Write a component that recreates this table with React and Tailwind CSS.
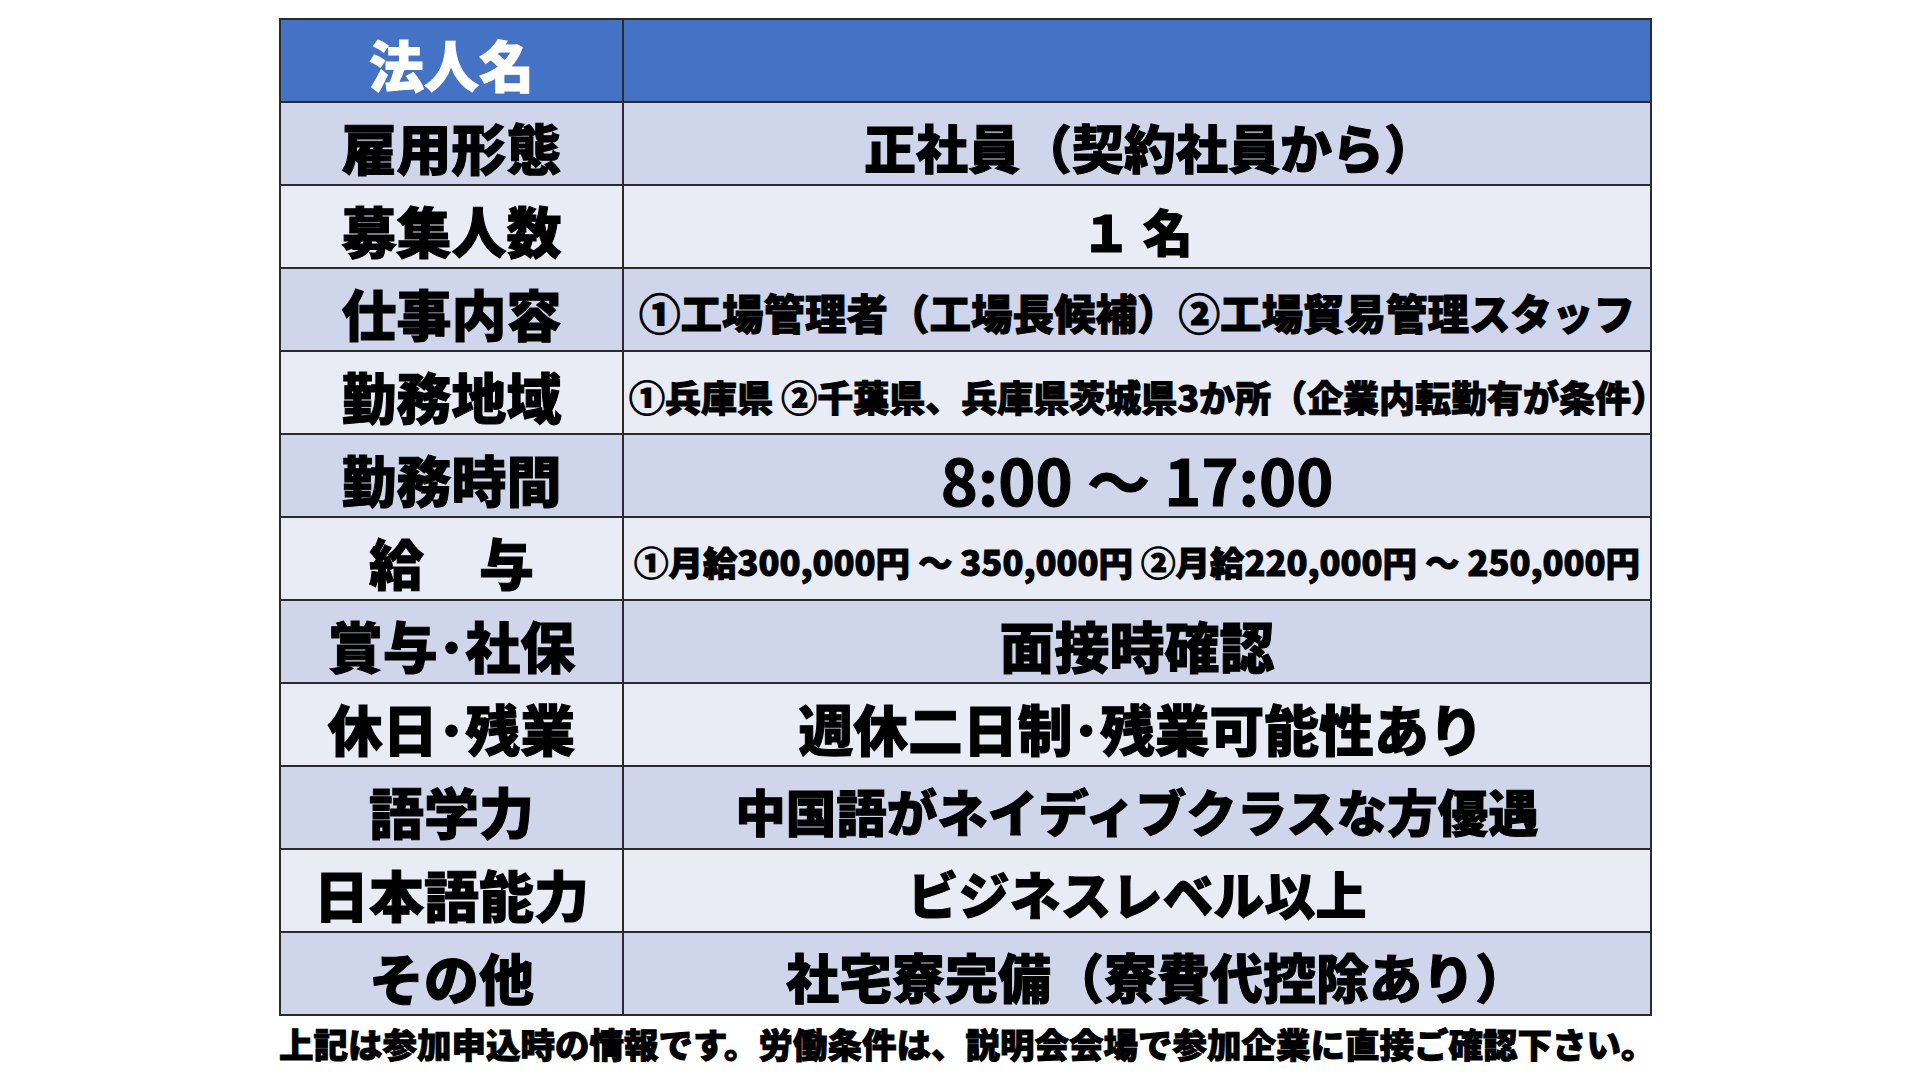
import React from 'react';

const JP = { fontFamily: '"Noto Sans CJK JP", "Noto Sans", sans-serif' };

// label / value / size (and nudge) of the value text
const ROWS = [
  { label: '雇用形態', value: '正社員（契約社員から）', size: 'text-[52px] pl-[26px]' },
  { label: '募集人数', value: '１ 名', size: 'text-[50px]' },
  { label: '仕事内容', value: '①工場管理者（工場長候補）②工場貿易管理スタッフ', size: 'text-[41.5px]' },
  { label: '勤務地域', value: '①兵庫県 ②千葉県、兵庫県茨城県3か所（企業内転勤有が条件）', size: 'text-[36px] pl-[22px]' },
  { label: '勤務時間', value: '8:00 ～ 17:00', size: 'text-[63px] font-bold' },
  { label: '給　与', value: '①月給300,000円 ～ 350,000円 ②月給220,000円 ～ 250,000円', size: 'text-[34.5px]' },
  { label: '賞与･社保', value: '面接時確認', size: 'text-[55px]' },
  { label: '休日･残業', value: '週休二日制･残業可能性あり', size: 'text-[54.8px] pl-[8px]' },
  { label: '語学力', value: '中国語がネイディブクラスな方優遇', size: 'text-[50.5px]' },
  { label: '日本語能力', value: 'ビジネスレベル以上', size: 'text-[51px]' },
  { label: 'その他', value: '社宅寮完備（寮費代控除あり）', size: 'text-[53px] pl-[40px]' },
];

const heavy = '[-webkit-text-stroke:1px_currentcolor]';

export default function App() {
  return (
    <div className="w-[1920px] h-[1080px] bg-white pl-[279px] pt-[18px]" style={JP}>
      <div className="w-[1373px] grid grid-cols-[341px_1026px] auto-rows-[81px] gap-[2px] p-[2px] bg-[#2b2b2b]">
        {/* header */}
        <div className={`bg-[#4472c4] flex items-center justify-center text-white font-black text-[55px] leading-none pt-[6px] ${heavy}`}>
          法人名
        </div>
        <div className="bg-[#4472c4]" />

        {ROWS.map((row, i) => {
          const bg = i % 2 === 0 ? 'bg-[#cfd5ea]' : 'bg-[#e9ebf5]';
          return (
            <React.Fragment key={row.label}>
              <div className={`${bg} flex items-center justify-center text-black font-black text-[55px] leading-none pt-[6px] whitespace-pre ${heavy}`}>
                {row.label}
              </div>
              <div className={`${bg} flex items-center justify-center text-black font-black ${row.size} leading-none pt-[6px] whitespace-pre ${heavy}`}>
                {row.value}
              </div>
            </React.Fragment>
          );
        })}
      </div>
      <div className={`mt-[10px] text-black font-black text-[34.5px] leading-none whitespace-nowrap ${heavy}`}>
        上記は参加申込時の情報です。労働条件は、説明会会場で参加企業に直接ご確認下さい。
      </div>
    </div>
  );
}
